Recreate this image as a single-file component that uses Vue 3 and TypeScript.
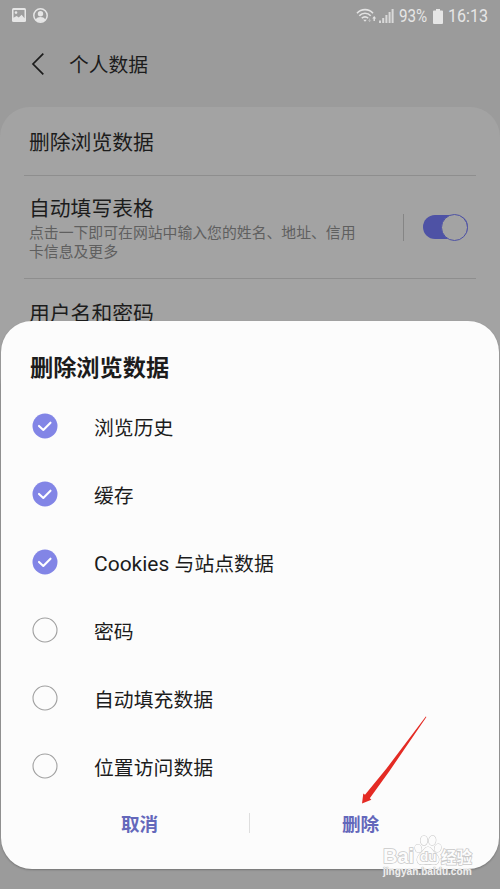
<script setup lang="ts">
import { ref } from 'vue'

interface Option {
  latin?: string
  label: string
  checked: boolean
}

const options = ref<Option[]>([
  { label: '浏览历史', checked: true },
  { label: '缓存', checked: true },
  { latin: 'Cookies', label: '与站点数据', checked: true },
  { label: '密码', checked: false },
  { label: '自动填充数据', checked: false },
  { label: '位置访问数据', checked: false },
])
</script>

<template>
  <div class="screen">
    <header class="status">
      <div class="status-left">
        <svg width="14" height="14" viewBox="0 0 14 14">
          <rect width="14" height="14" rx="1.5" fill="#e6e6e6" />
          <path d="M1.500 9.800V2h11v8.300L9.600 6.800 6.800 9.400 4.600 8z" fill="#9e9e9e" />
          <circle cx="4" cy="4.600" r="1.300" fill="#e6e6e6" />
        </svg>
        <svg width="15" height="15" viewBox="0 0 15 15">
          <circle cx="7.500" cy="7.500" r="6.700" fill="none" stroke="#e6e6e6" stroke-width="1.500" />
          <circle cx="7.500" cy="5.800" r="2.700" fill="#e6e6e6" />
          <path d="M2.400 11.800c1.300-2.100 3-2.700 5.100-2.700s3.800.6 5.100 2.700a6.800 6.800 0 0 1-10.200 0z" fill="#e6e6e6" />
        </svg>
      </div>
      <div class="status-right">
        <svg width="21" height="16" viewBox="0 0 21 16">
          <g fill="none" stroke="#e3e3e3" stroke-width="1.600">
            <path d="M1 5.200c4.300-4.800 11.700-4.800 16 0" />
            <path d="M3.300 7.800c3.100-3.400 8.300-3.400 11.400 0" />
            <path d="M5.800 10.300c1.800-1.900 4.600-1.900 6.400 0" />
          </g>
          <path d="M7.200 11.700h3.600L9 13.800z" fill="#e3e3e3" />
          <path d="M13.600 10.500v3M12.400 12.300l1.200 1.400 1.200-1.400" fill="none" stroke="#c4c4c4" stroke-width=".8" />
          <path d="M16.200 10.600l2-2.600 2 2.600h-1.300V13h-1.400v-2.400z" fill="#e3e3e3" />
        </svg>
        <svg class="signal" width="15" height="14" viewBox="0 0 15 14">
          <path d="M0 11.500h2V14H0zM3.200 9h2v5h-2zM6.400 6h2v8h-2zM9.600 3h2v11h-2zM12.600 0h2v14h-2z" fill="#d9d9d9" />
        </svg>
        <span class="percent">93%</span>
        <svg class="battery" width="10" height="15" viewBox="0 0 10 15">
          <path d="M3 0h4v1.500h2a1 1 0 0 1 1 1V14a1 1 0 0 1-1 1H1a1 1 0 0 1-1-1V2.500a1 1 0 0 1 1-1h2z" fill="#e6e6e6" />
        </svg>
        <span class="clock">16:13</span>
      </div>
    </header>

    <nav class="bar">
      <svg width="14" height="24" viewBox="0 0 14 24">
        <path d="M12.300 1.700L2 12l10.300 10.300" fill="none" stroke="#1c1c1c" stroke-width="1.700" />
      </svg>
      <span>个人数据</span>
    </nav>

    <main class="card">
      <section class="row first"><span class="name">删除浏览数据</span></section>
      <section class="row second">
        <div class="copy">
          <div class="name">自动填写表格</div>
          <p>点击一下即可在网站中输入您的姓名、地址、信用<br />卡信息及更多</p>
        </div>
        <i class="split"></i>
        <div class="toggle"><i></i></div>
      </section>
      <section class="row third"><span class="name">用户名和密码</span></section>
    </main>

    <div class="sheet">
      <h2>删除浏览数据</h2>
      <ul>
        <li v-for="option in options" :key="option.label" @click="option.checked = !option.checked">
          <svg width="26" height="26" viewBox="0 0 26 26">
            <template v-if="option.checked">
              <circle cx="13" cy="13" r="12.500" fill="#8285e6" />
              <path d="M7 12.900l4.300 4.100 7.200-7.300" fill="none" stroke="#fff" stroke-width="2.100" stroke-linecap="round" stroke-linejoin="round" />
            </template>
            <circle v-else cx="13" cy="13" r="12" fill="none" stroke="#a0a0a0" stroke-width="1.100" />
          </svg>
          <span><span v-if="option.latin" class="latin">{{ option.latin }}&nbsp;</span>{{ option.label }}</span>
        </li>
      </ul>
      <div class="actions">
        <button>取消</button>
        <i></i>
        <button>删除</button>
      </div>
    </div>

    <svg class="arrow" width="70" height="92" viewBox="0 0 70 92">
      <path d="M65.800 4.500l.6.500L29.500 59 9.800 86.200l1.600 1.600L2 91.500 3.300 81.500l1.700 1.300L26.500 56.500z" fill="#e42b24" />
    </svg>

    <div class="watermark">
      <div class="brand">
        <span class="bai">Bai</span>
        <span class="paw">
          <svg width="28" height="31" viewBox="0 0 28 31">
            <g fill="#fcfcfc" stroke="#c8c8c8" stroke-width="1.100">
              <ellipse cx="4.300" cy="13.500" rx="3.200" ry="4.100" transform="rotate(-15 4.300 13.500)" />
              <ellipse cx="10" cy="5.500" rx="3.500" ry="4.700" />
              <ellipse cx="18.300" cy="5.500" rx="3.500" ry="4.700" transform="rotate(8 18.300 5.500)" />
              <ellipse cx="23.800" cy="13" rx="3.200" ry="4.100" transform="rotate(15 23.800 13)" />
              <path d="M14 12c3 0 4 2.800 6.200 5 2.500 2.400 5 4.700 4.700 8.200-.4 4-3.600 4.600-6.700 4.200-3-.4-5.400-.4-8.400 0-3.100.4-6.300-.2-6.700-4.200-.3-3.500 2.200-5.800 4.700-8.200 2.200-2.200 3.200-5 6.200-5z" />
            </g>
          </svg>
          <b>du</b>
        </span>
        <span class="jing">经验</span>
      </div>
      <div class="url">jingyan.baidu.com</div>
    </div>
  </div>
</template>

<style>
body {
  background: #9b9b9b;
  overflow: hidden;
}
</style>

<style scoped>
* {
  box-sizing: border-box;
}
.screen {
  position: relative;
  display: flex;
  flex-direction: column;
  width: 500px;
  height: 889px;
  overflow: hidden;
  background: #9b9b9b;
  color: #1c1c1c;
  font-family: Roboto, 'Noto Sans CJK SC', sans-serif;
}
.status {
  display: flex;
  flex: none;
  justify-content: space-between;
  height: 32px;
  padding: 0 12px;
  color: #e6e6e6;
}
.status-left {
  display: flex;
  align-items: center;
  gap: 7px;
  height: 30px;
}
.status-right {
  display: flex;
  align-items: center;
  height: 32px;
  font-size: 18.500px;
}
.signal {
  margin-left: 2px;
}
.percent {
  width: 29px;
  margin-left: 5px;
  transform: scaleX(.82);
  transform-origin: left;
}
.battery {
  margin-left: 5px;
}
.clock {
  width: 40px;
  margin-left: 5px;
  transform: scaleX(.87);
  transform-origin: left;
}
.bar {
  display: flex;
  flex: none;
  align-items: center;
  height: 63px;
  padding-left: 31px;
  gap: 24px;
  font-size: 19.800px;
}
.card {
  flex: none;
  height: 300px;
  margin-top: 12px;
  padding: 0 24px;
  border-radius: 30px;
  background: #a3a3a3;
}
.row {
  padding-left: 5px;
}
.name {
  font-size: 20.800px;
  line-height: 30px;
}
.first {
  height: 69px;
  padding-top: 21px;
  border-bottom: 1px solid #8e8e8e;
}
.second {
  display: flex;
  align-items: center;
  height: 103px;
  border-bottom: 1px solid #8e8e8e;
}
.copy {
  width: 374px;
  padding-top: 2px;
}
.copy p {
  margin: 0;
  color: #5f5f5f;
  font-size: 14.850px;
  line-height: 19px;
  white-space: nowrap;
}
.split {
  width: 1px;
  height: 27px;
  background: #858585;
}
.toggle {
  display: flex;
  align-items: center;
  justify-content: flex-end;
  width: 45px;
  height: 24px;
  margin-left: 19px;
  border-radius: 12px;
  background: #4e52a5;
}
.toggle i {
  flex: none;
  width: 27px;
  height: 27px;
  border: 1px solid #4e52a5;
  border-radius: 50%;
  background: #a3a3a3;
}
.third {
  padding-top: 20px;
}
.sheet {
  position: absolute;
  top: 321px;
  left: 1px;
  width: 498px;
  height: 548px;
  border-radius: 31px;
  background: #fcfcfc;
  box-shadow: 0 1px 2px rgba(0, 0, 0, .25);
}
h2 {
  height: 71px;
  margin: 0;
  padding: 30px 0 0 29px;
  font-size: 23.200px;
  font-weight: 700;
  line-height: 34px;
}
ul {
  margin: 0;
  padding: 0 0 0 31px;
  list-style: none;
}
li {
  display: flex;
  align-items: center;
  gap: 36px;
  height: 68px;
  font-size: 19.850px;
}
.latin {
  font-size: 21px;
}
.actions {
  display: flex;
  align-items: center;
  height: 46px;
  padding: 0 28px;
}
.actions button {
  flex: 1;
  padding: 0 0 2px;
  border: 0;
  background: none;
  color: #6468bb;
  font: 700 18.600px Roboto, 'Noto Sans CJK SC', sans-serif;
}
.actions i {
  width: 1px;
  height: 20px;
  margin-left: -1px;
  background: #dedede;
}
.arrow {
  position: absolute;
  top: 712px;
  left: 360px;
}
.watermark {
  position: absolute;
  top: 835px;
  left: 383px;
  width: 92px;
  height: 45px;
  font-family: 'Liberation Sans', sans-serif;
}
.brand {
  display: flex;
  align-items: flex-end;
  height: 31px;
  color: #fcfcfc;
  font-weight: 700;
  -webkit-text-stroke: 1.500px #c8c8c8;
  paint-order: stroke fill;
}
.bai {
  width: 31px;
  font-size: 20px;
  line-height: 20px;
}
.paw {
  position: relative;
  width: 27px;
  height: 31px;
}
.paw b {
  position: absolute;
  top: 14px;
  left: 6px;
  font-size: 13.500px;
  line-height: 15px;
}
.jing {
  font-family: 'Noto Sans CJK SC', sans-serif;
  font-size: 15.500px;
  line-height: 20px;
  white-space: nowrap;
}
.url {
  width: 89px;
  color: #eee;
  font-size: 10.100px;
  font-weight: 700;
  line-height: 12px;
  white-space: nowrap;
  text-shadow: 0 0 1px #999, 0 0 1px #bbb;
}
</style>
